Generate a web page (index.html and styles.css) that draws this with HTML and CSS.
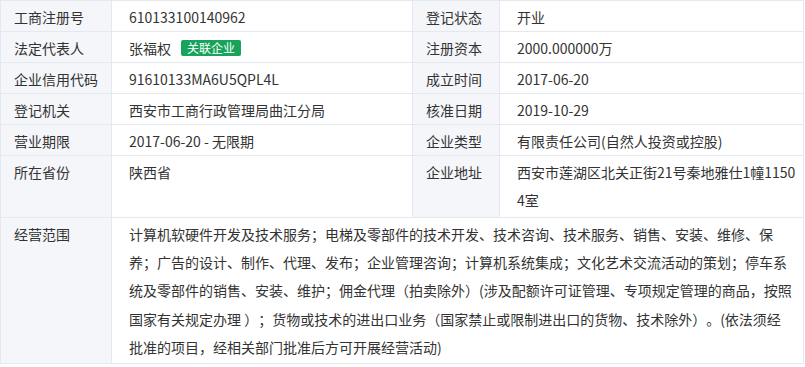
FILE: index.html
```html
<!DOCTYPE html>
<html lang="zh-CN">
<head>
<meta charset="utf-8">
<title>工商信息</title>
<link rel="stylesheet" href="styles.css">
</head>
<body>
<table class="info">
  <colgroup>
    <col class="c-label1">
    <col class="c-value1">
    <col class="c-label2">
    <col class="c-value2">
  </colgroup>
  <tbody>
    <tr>
      <td class="label">工商注册号</td>
      <td class="value">610133100140962</td>
      <td class="label">登记状态</td>
      <td class="value">开业</td>
    </tr>
    <tr>
      <td class="label">法定代表人</td>
      <td class="value">张福权<span class="badge">关联企业</span></td>
      <td class="label">注册资本</td>
      <td class="value">2000.000000万</td>
    </tr>
    <tr>
      <td class="label">企业信用代码</td>
      <td class="value">91610133MA6U5QPL4L</td>
      <td class="label">成立时间</td>
      <td class="value">2017-06-20</td>
    </tr>
    <tr>
      <td class="label">登记机关</td>
      <td class="value">西安市工商行政管理局曲江分局</td>
      <td class="label">核准日期</td>
      <td class="value">2019-10-29</td>
    </tr>
    <tr>
      <td class="label">营业期限</td>
      <td class="value">2017-06-20 - 无限期</td>
      <td class="label">企业类型</td>
      <td class="value">有限责任公司(自然人投资或控股)</td>
    </tr>
    <tr class="tall">
      <td class="label">所在省份</td>
      <td class="value">陕西省</td>
      <td class="label">企业地址</td>
      <td class="value wrap">西安市莲湖区北关正街21号秦地雅仕1幢11504室</td>
    </tr>
    <tr class="tall">
      <td class="label">经营范围</td>
      <td class="value wrap scope" colspan="3">计算机软硬件开发及技术服务；电梯及零部件的技术开发、技术咨询、技术服务、销售、安装、维修、保养；广告的设计、制作、代理、发布；企业管理咨询；计算机系统集成；文化艺术交流活动的策划；停车系统及零部件的销售、安装、维护；佣金代理（拍卖除外）(涉及配额许可证管理、专项规定管理的商品，按照国家有关规定办理 ）；货物或技术的进出口业务（国家禁止或限制进出口的货物、技术除外）。(依法须经批准的项目，经相关部门批准后方可开展经营活动)</td>
    </tr>
  </tbody>
</table>
</body>
</html>
```

FILE: styles.css
```css
html, body {
  margin: 0;
  padding: 0;
  background: #ffffff;
}

body {
  font-family: "Noto Sans CJK SC", "Microsoft YaHei", sans-serif;
  font-size: 14px;
  color: #333333;
  text-spacing-trim: space-all;
}

.info {
  border-collapse: collapse;
  table-layout: fixed;
  width: 803px;
}

.c-label1 { width: 111px; }
.c-value1 { width: 301px; }
.c-label2 { width: 87px; }
.c-value2 { width: 304px; }

.info td {
  border: 1px solid #e6e8ef;
  vertical-align: top;
  line-height: 28px;
  padding: 2px 0 0 0;
}

.info .label {
  background: #f5f6fa;
  padding-left: 13px;
  white-space: nowrap;
}

.info .value {
  padding-left: 17px;
  padding-right: 5px;
}

.info .tall td {
  padding-bottom: 2px;
}

.info .wrap {
  line-height: 28.33px;
  word-break: break-all;
}

.info .scope {
  padding-right: 10px;
}

.badge {
  display: inline-block;
  vertical-align: 1px;
  margin-left: 10px;
  padding: 0 6px;
  height: 16px;
  line-height: 16px;
  font-size: 12px;
  color: #ffffff;
  background: #17a35b;
  border-radius: 2px;
}
```
